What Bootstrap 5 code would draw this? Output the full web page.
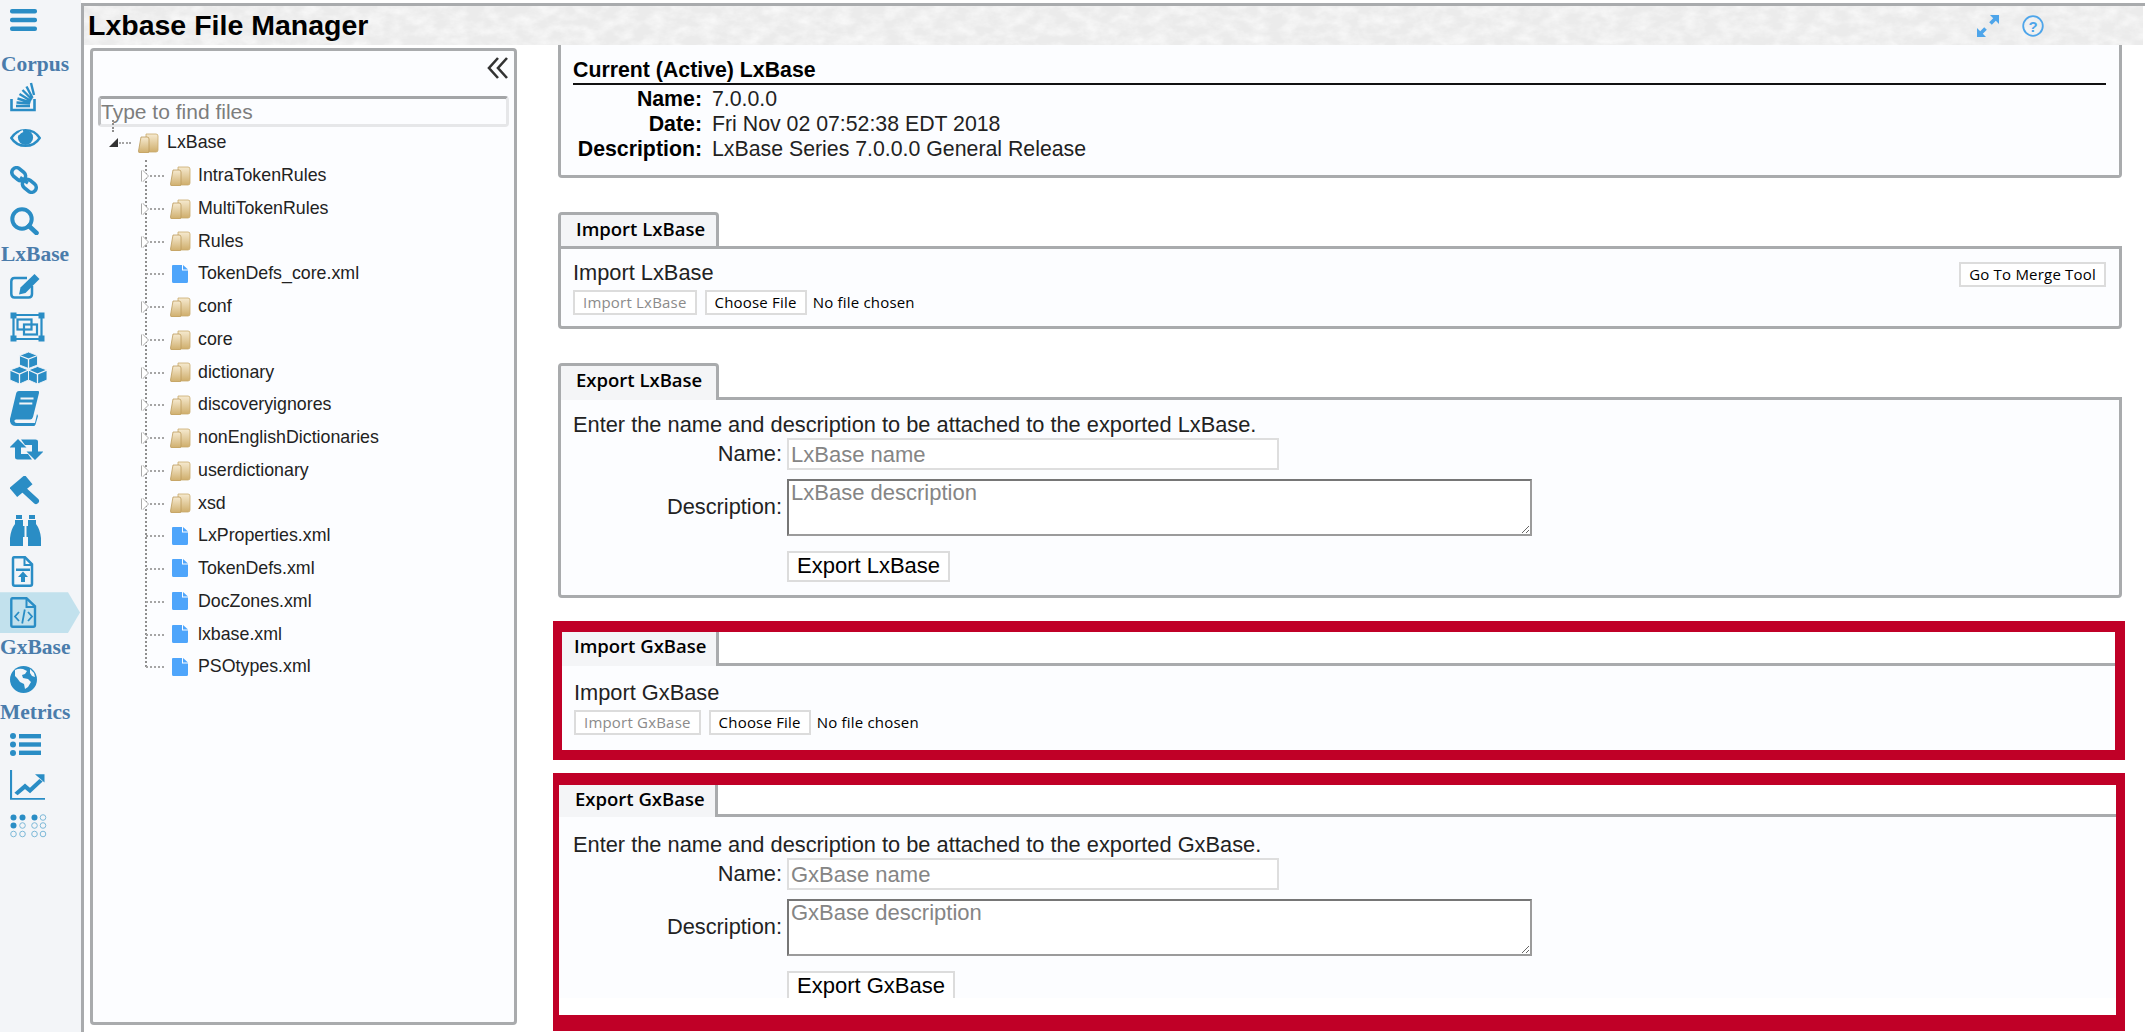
<!DOCTYPE html>
<html>
<head>
    <title>Lxbase File Manager</title>
    <link href="https://cdn.jsdelivr.net/npm/bootstrap@5.3.3/dist/css/bootstrap.min.css" rel="stylesheet">
    <style>
        html, body { height: 1032px; overflow: hidden; background: #fff; font-family: "Liberation Sans", Arial, sans-serif; color: #222; }
        .app-shell { height: 1032px; }

        /* left icon rail */
        .icon-rail { width: 81px; flex: none; background: #f3f5f8; }
        .rail-slot { height: 40.8px; padding-left: 10px; flex: none; }
        .rail-slot svg { fill: #2a8dc5; display: block; }
        .rail-wide { height: 41.5px; }
        .rail-active { background: #c2e1ed; clip-path: polygon(0 0, 68px 0, 80px 50%, 68px 100%, 0 100%); }
        .rail-label { height: 24px; width: 70px; flex: none; font: bold 21.5px/24px "Liberation Serif", serif; color: #4a7cab; text-align: center; white-space: nowrap; }
        .rail-label-first { margin-top: 11px; }
        .rail-label-gap { margin-top: 2px; }

        /* main frame */
        .main-frame { margin-top: 3px; border-top: 3px solid #a9abad; border-left: 3px solid #a9abad; min-width: 0; }
        .title-band { height: 39px; padding: 0 0 0 4px; margin-right: 2px; background-color: #ebebeb;
            background-image: url("data:image/svg+xml,%3Csvg xmlns='http://www.w3.org/2000/svg' width='2100' height='39'%3E%3Cfilter id='n'%3E%3CfeTurbulence type='fractalNoise' baseFrequency='0.06 0.1' numOctaves='4' seed='7'/%3E%3CfeColorMatrix values='0 0 0 0 1 0 0 0 0 1 0 0 0 0 1 0 0 0 1.2 -0.4'/%3E%3C/filter%3E%3Crect width='2100' height='39' filter='url(%23n)'/%3E%3C/svg%3E"); }
        .title-band h1 { font: bold 28.5px/37px "Liberation Sans", Arial, sans-serif; color: #000; margin: 0; }
        .band-tools { padding-right: 99px; gap: 23px; }

        /* file tree */
        .work-area { padding-left: 6px; min-height: 0; }
        .tree-panel { width: 427px; height: 977px; flex: none; margin-top: 3px; border: 3px solid #a9abad; border-radius: 4px; background: #fcfdff; padding: 0 5px; }
        .collapse-btn { height: 45px; padding: 6px 1px 0 0; }
        .tree-search.form-control { height: 31px; padding: 1px 0 0 0; border: 3px solid #e6e7e9; border-top-color: #a3a5a7; border-left-color: #bcbec0; border-radius: 4px; font-size: 21px; background: #fcfdff; box-shadow: none; }
        .tree-search::placeholder { color: #7d7d7d; opacity: 1; }
        .tree-root { height: 33px; margin-top: -1px; padding-left: 11px; font-size: 17.8px; position: relative; }
        .tree-kids { list-style: none; margin: 0; padding: 0 0 0 72px; position: relative; font-size: 17.8px; }
        .tree-kids::before { content: ""; position: absolute; left: 47px; top: 1px; bottom: 16px; border-left: 2px dotted #8e8e8e; }
        .tree-kids li { height: 32.75px; position: relative; gap: 7px; }
        .tree-kids li::before { content: ""; position: absolute; left: -24px; width: 18px; top: 16px; border-top: 2px dotted #a5a5a5; }
        .tree-kids li.tree-closed::after { content: ""; position: absolute; left: -28px; top: 11px; border: 6px solid transparent; border-left: 6px solid #fff; filter: drop-shadow(1px 0 0 #aaa) drop-shadow(-1px 0 0 #aaa); }
        .root-line { width: 12px; margin: 0 7px 0 1px; border-top: 2px dotted #a5a5a5; }
        .root-arrow { width: 0; height: 0; border-style: solid; border-width: 0 0 9px 9px; border-color: transparent transparent #333 transparent; }
        .root-stem { position: absolute; left: 14px; top: -6px; height: 12px; border-left: 2px dotted #8e8e8e; }
        .file-glyph { margin: 0 3px 0 2px; }

        /* right column */
        .content-col { margin-left: 36px; width: 1572px; flex: none; min-width: 0; height: 987px; overflow: hidden; }
        .info-box, .tab-body { border: 3px solid #a9abad; background: #fcfdff; border-radius: 0 0 4px 4px; }
        .info-box { margin: 0 3px 0 5px; height: 133px; border-top: 0; padding: 12px 13px 0 12px; }
        .info-box h2 { font: bold 21.3px/26px "Liberation Sans", Arial, sans-serif; margin: 0 0 2px; border-bottom: 2px solid #111; color: #000; }
        .info-row { font-size: 21.3px; line-height: 25px; }
        .info-row b { width: 129px; flex: none; text-align: right; margin-right: 10px; color: #000; white-space: nowrap; }
        .tab-group { margin: 34px 3px 0 5px; }
        .tab-head { display: block; width: 161px; height: 37px; padding: 0 0 0 15px; background: #f4f5f7; border: 3px solid #a9abad; border-bottom: 0; border-radius: 4px 4px 0 0; font: 600 18.5px/28px "Open Sans", sans-serif; color: #000; white-space: nowrap; margin-bottom: -3px; position: relative; }
        .tab-body { padding: 11px 13px 0 12px; font-size: 21.8px; }
        .tab-body-import { height: 83px; padding-top: 10px; }
        .tab-body-export { height: 201px; }
        .body-line { line-height: 27px; white-space: nowrap; }
        .small-btn { font: 15px/21px "Open Sans", sans-serif; letter-spacing: .2px; padding: 0 8px; height: 25px; border: 2px solid #dcdcdc; border-radius: 0; background: #fff; color: #000; white-space: nowrap; }
        .small-btn:disabled { color: #8b8b8b; border-color: #dcdcdc; background: #fff; opacity: 1; }
        .no-file { font: 15px/25px "Open Sans", sans-serif; letter-spacing: .2px; color: #000; margin-left: 6px; }
        .merge-btn { position: absolute; right: 13px; top: 13px; }
        .form-line { gap: 5px; }
        .form-line label { width: 209px; text-align: right; }
        .name-input.form-control, .desc-input.form-control { border-radius: 0; padding: 0 2px; font-size: 22px; box-shadow: none; background: #fff; }
        .name-input.form-control { width: 492px; height: 32px; border: 2px solid #dedede; }
        .desc-input.form-control { width: 745px; height: 57px; min-height: 0; border: 2px solid #9b9b9b; border-top-color: #767676; border-left-color: #767676; line-height: 24px; resize: both; }
        .name-input::placeholder, .desc-input::placeholder { color: #858585; opacity: 1; }
        .export-btn { font: 22px/26px "Liberation Sans", Arial, sans-serif; height: 31px; padding: 0 8px; margin: 15px 0 0 214px; border: 2px solid #dcdcdc; border-radius: 0; background: #fff; color: #000; white-space: nowrap; }

        /* red call-out frames */
        .red-frame { background: #fff; border: solid #c00027; }
        .red-import { border-width: 11px 10px 11px 9px; margin-top: 23px; height: 139px; }
        .red-export { border-width: 12px 9px 16px 6px; margin-top: 13px; height: 258px; }
        .red-frame .tab-head { border-top: 0; border-left: 0; border-radius: 0; height: 34px; width: 157px; padding-left: 12px; }
        .red-export .tab-head { height: 32px; width: 159px; line-height: 27px; padding-left: 16px; }
        .red-frame .tab-body { border-width: 3px 0 0; border-radius: 0; }
        .red-import .tab-body { padding-top: 13px; height: 87px; }
        .red-export .tab-body { height: 184px; overflow: hidden; padding-left: 14px; padding-top: 14px; }
        .red-export .body-line { line-height: 27px; }
    </style>
</head>
<body>
<svg width="0" height="0" class="position-absolute">
    <defs>
        <linearGradient id="tan" x1="0" y1="0" x2="0" y2="1"><stop offset="0" stop-color="#f6ead0"/><stop offset="1" stop-color="#cfae6c"/></linearGradient>
        <symbol id="folder" viewBox="0 0 21 21">
            <path d="M8 2h10q2 0 2 2v14q0 2-2 2H8z" fill="url(#tan)" stroke="#c9aa6c" stroke-width=".8"/>
            <path d="M3 5h6q2 0 2 2v12q0 2-2 2H2q-1.500 0-1.500-2z" fill="url(#tan)" stroke="#bb9a5c" stroke-width=".8"/>
        </symbol>
        <symbol id="xmlfile" viewBox="0 0 16 18">
            <path d="M1 0h9v5.500h6v11q0 1.500-1.500 1.500h-13Q0 18 0 16.500V1q0-1 1-1z" fill="#4ea5fb"/>
            <path d="M11 0l5 4.500h-5z" fill="#4ea5fb"/>
        </symbol>
    </defs>
</svg>

<div class="app-shell d-flex">
    <nav class="icon-rail d-flex flex-column">
        <div class="rail-slot d-flex align-items-center">
            <svg width="27" height="22" viewBox="0 0 27 22"><rect width="27" height="4.500" rx="2"/><rect y="8.700" width="27" height="4.500" rx="2"/><rect y="17.500" width="27" height="4.500" rx="2"/></svg>
        </div>
        <div class="rail-label rail-label-first">Corpus</div>
        <div class="rail-slot rail-wide d-flex align-items-center">
            <svg width="26" height="30" viewBox="0 0 26 30"><path d="M1.500 17v11h23V17" fill="none" stroke="#2a8dc5" stroke-width="2.600"/><path d="M6 24h14" stroke="#2a8dc5" stroke-width="2.600"/><path d="M6.500 20.500l13.500 1M7.500 16.500l13 4M9.500 12l11.500 7M12.500 8l9.500 9.500M16.500 4.500l6 11.500M21 1l3 12" stroke="#2a8dc5" stroke-width="2.400" fill="none"/></svg>
        </div>
        <div class="rail-slot rail-wide d-flex align-items-center">
            <svg width="31" height="20" viewBox="0 0 31 20"><path d="M1.300 10C8-.5 23-.5 29.700 10 23 20.500 8 20.500 1.300 10z" fill="none" stroke="#2a8dc5" stroke-width="2.400"/><circle cx="15.500" cy="9.500" r="7.600"/><path d="M8 7c1.500-2 3-3.300 5-4" stroke="#f3f5f8" stroke-width="2" fill="none"/></svg>
        </div>
        <div class="rail-slot rail-wide d-flex align-items-center">
            <svg width="28" height="28" viewBox="0 0 28 28"><g fill="none" stroke="#2a8dc5" stroke-width="3.600"><rect x="1.200" y="3.500" width="15" height="9.500" rx="4.700" transform="rotate(40 8.700 8.200)"/><rect x="11.800" y="15" width="15" height="9.500" rx="4.700" transform="rotate(40 19.300 19.800)"/></g><path d="M10 11.500l8 5.500" stroke="#2a8dc5" stroke-width="3.400"/></svg>
        </div>
        <div class="rail-slot rail-wide d-flex align-items-center">
            <svg width="29" height="28" viewBox="0 0 29 28"><circle cx="12" cy="12" r="9.700" fill="none" stroke="#2a8dc5" stroke-width="4"/><path d="M19 19l7.500 7" stroke="#2a8dc5" stroke-width="4.600" stroke-linecap="round"/></svg>
        </div>
        <div class="rail-label">LxBase</div>
        <div class="rail-slot d-flex align-items-center">
            <svg width="31" height="26" viewBox="0 0 31 26"><path d="M22 13v8q0 3.500-3.500 3.500h-14Q1.300 24.500 1.300 21V8.500Q1.300 5 4.500 5H17" fill="none" stroke="#2a8dc5" stroke-width="2.500"/><path d="M10.500 14.500L24.500 1l5 5-14 14-6.500 1.500z"/></svg>
        </div>
        <div class="rail-slot d-flex align-items-center">
            <svg width="35" height="30" viewBox="0 0 35 30"><g fill="none" stroke="#2a8dc5"><path d="M3.500 3h28M3.500 27h28M3.500 3v24M31.500 3v24" stroke-width="2.200"/><rect x="7.500" y="7.500" width="14" height="10" stroke-width="2.200"/><rect x="14" y="12.500" width="13" height="10" stroke-width="2.200"/></g><g><rect width="6" height="6" x="0.500" y="0.500"/><rect width="6" height="6" x="28.500" y="0.500"/><rect width="6" height="6" x="0.500" y="23.500"/><rect width="6" height="6" x="28.500" y="23.500"/></g></svg>
        </div>
        <div class="rail-slot d-flex align-items-center">
            <svg width="37" height="32" viewBox="0 0 37 32"><g stroke="#f3f5f8" stroke-width=".9"><path d="M18.500 0l9 3.500v9.500l-9 3.500-9-3.500V3.500z"/><path d="M9.500 14.500l9 3.500v10l-9 4-9.500-4V18z"/><path d="M27.500 14.500l9.500 3.500v10l-9.500 4-9-4V18z"/><path d="M9.500 3.500l9 3.500 9-3.500M18.500 7v9.500M0 18l9.500 4 9-4M9.500 22v10M18.500 18l9 4 9.500-4M27.500 22v10" fill="none" stroke-width="1.300"/></g></svg>
        </div>
        <div class="rail-slot d-flex align-items-center">
            <svg width="29" height="35" viewBox="0 0 29 35"><path d="M9 0h19q1.500 0 1 2l-6 24q-.8 2.500-3 2.500H6q-2 .2-1.500 2 .6 1.500 2.500 1.500h18l2-9 1 2-2.500 8.500q-.5 1.500-2 1.500H6q-5 0-6-4.500Q-.4 29 .5 26L6 3q.5-3 3-3z"/><path d="M10.500 7.500h13M9.300 12.500h13" stroke="#f3f5f8" stroke-width="2.200"/></svg>
        </div>
        <div class="rail-slot d-flex align-items-center">
            <svg width="33" height="21" viewBox="0 0 33 21"><path d="M8 0l8.500 8.500H11V15h7l4 5.500H7.500Q5 20.500 5 18.500V8.500H-.5z"/><path d="M25 21l-8.500-8.500H22V6h-7L11 .5h14.500Q28 .5 28 2.500v10h5.500z"/></svg>
        </div>
        <div class="rail-slot d-flex align-items-center">
            <svg width="30" height="29" viewBox="0 0 30 29"><rect x="1" y="4" width="20" height="12" transform="rotate(-40 11 10)"/><path d="M14 14l12 11" stroke="#2a8dc5" stroke-width="6" stroke-linecap="round"/></svg>
        </div>
        <div class="rail-slot d-flex align-items-center">
            <svg width="31" height="31" viewBox="0 0 31 31"><path d="M6 0h6v4H6zM19 0h6v4h-6zM5 5h8v6h1.500v11H13v9H0v-8q1-9 5-14zM26 5h-8v6h-1.500v11H18v9h13v-8q-1-9-5-14z"/></svg>
        </div>
        <div class="rail-slot d-flex align-items-center">
            <svg width="28" height="31" viewBox="0 0 28 31"><path d="M4 1.300h11l7 7V28a1.700 1.700 0 0 1-1.700 1.700H4.700A1.700 1.700 0 0 1 3 28V3q0-1.700 1-1.700z" fill="none" stroke="#2a8dc5" stroke-width="2.500"/><path d="M14.500 1.500V9h7" fill="none" stroke="#2a8dc5" stroke-width="2"/><path d="M6 12.500h14v2.500H6z"/><path d="M13 15.500l5 5.500h-3v5h-4v-5H8z"/></svg>
        </div>
        <div class="rail-slot rail-active d-flex align-items-center">
            <svg width="27" height="31" viewBox="0 0 27 31"><path d="M2.500 1.300h14l8.500 8V28q0 1.700-1.700 1.700H2.700Q1.300 29.700 1.300 28V3q0-1.700 1.200-1.700z" fill="none" stroke="#2a8dc5" stroke-width="2.400"/><path d="M16.500 1.500V10h8" fill="none" stroke="#2a8dc5" stroke-width="2"/><path d="M9 15l-4 4.500 4 4.500M18 15l4 4.500-4 4.500M14.800 12.500l-2.600 14" fill="none" stroke="#2a8dc5" stroke-width="1.800"/></svg>
        </div>
        <div class="rail-label rail-label-gap">GxBase</div>
        <div class="rail-slot d-flex align-items-center">
            <svg width="27" height="27" viewBox="0 0 27 27"><circle cx="13.500" cy="13.500" r="13.500"/><path d="M5 4q4-2 8-1l4 2-2 3-3 1 1 3 5 1 3 3-3 5-3 2-1-5-4-2-3-4-2-2zM20 3l4 4 1 4-3-1-2-3z" fill="#f3f5f8"/></svg>
        </div>
        <div class="rail-label">Metrics</div>
        <div class="rail-slot d-flex align-items-center">
            <svg width="31" height="23" viewBox="0 0 31 23"><circle cx="3" cy="3" r="3"/><circle cx="3" cy="11.500" r="3"/><circle cx="3" cy="20" r="3"/><rect x="9" y="1" width="22" height="4.400"/><rect x="9" y="9.300" width="22" height="4.400"/><rect x="9" y="17.600" width="22" height="4.400"/></svg>
        </div>
        <div class="rail-slot d-flex align-items-center">
            <svg width="35" height="30" viewBox="0 0 35 35" preserveAspectRatio="none"><path d="M1 0v33.700h34" fill="none" stroke="#2a8dc5" stroke-width="2.200"/><path d="M6 28l9-9 5 5 11-12" fill="none" stroke="#2a8dc5" stroke-width="4.500"/><path d="M25 5h9.500v9.500z"/></svg>
        </div>
        <div class="rail-slot d-flex align-items-center">
            <svg width="37" height="24" viewBox="0 0 37 24"><g><circle cx="3.500" cy="3.500" r="3"/><circle cx="12.500" cy="3.500" r="3"/><circle cx="24.500" cy="3.500" r="3"/><circle cx="3.500" cy="11.500" r="3"/></g><g fill="none" stroke="#7db9d8" stroke-width="1"><circle cx="33" cy="3.500" r="2.800"/><circle cx="12.500" cy="11.500" r="2.800"/><circle cx="24.500" cy="11.500" r="2.800"/><circle cx="33" cy="11.500" r="2.800"/><circle cx="3.500" cy="20" r="2.800"/><circle cx="12.500" cy="20" r="2.800"/><circle cx="24.500" cy="20" r="2.800"/><circle cx="33" cy="20" r="2.800"/></g></svg>
        </div>
    </nav>

    <div class="main-frame flex-grow-1 d-flex flex-column">
        <header class="title-band d-flex align-items-center justify-content-between">
            <h1>Lxbase File Manager</h1>
            <div class="band-tools d-flex align-items-center">
                <svg width="22" height="22" viewBox="0 0 22 22" fill="#4ea5ea"><path d="M13 0h9v9l-3.200-3.200-4 4-2.600-2.600 4-4zM9 22H0v-9l3.200 3.200 4-4 2.600 2.600-4 4z"/></svg>
                <svg width="22" height="22" viewBox="0 0 22 22"><circle cx="11" cy="11" r="9.800" fill="none" stroke="#4ea5ea" stroke-width="1.800"/><text x="11" y="16.500" text-anchor="middle" font-family="Liberation Sans" font-weight="bold" font-size="15" fill="#4ea5ea">?</text></svg>
            </div>
        </header>
        <div class="work-area d-flex flex-grow-1">
            <aside class="tree-panel">
                <div class="collapse-btn d-flex justify-content-end">
                    <svg width="21" height="22" viewBox="0 0 21 22" fill="none" stroke="#333" stroke-width="2.600"><path d="M11 1L2 11l9 10M20 1l-9 10 9 10"/></svg>
                </div>
                <input class="tree-search form-control" type="text" placeholder="Type to find files">
                <div class="tree-root d-flex align-items-center">
                    <span class="root-stem"></span>
                    <span class="root-arrow"></span>
                    <span class="root-line"></span>
                    <svg width="21" height="21"><use href="#folder"/></svg>
                    <span class="ms-2">LxBase</span>
                </div>
                <ul class="tree-kids" id="treeKids"></ul>
            </aside>
            <main class="content-col">
                <section class="info-box">
                    <h2>Current (Active) LxBase</h2>
                    <div class="info-row d-flex"><b>Name:</b><span>7.0.0.0</span></div>
                    <div class="info-row d-flex"><b>Date:</b><span>Fri Nov 02 07:52:38 EDT 2018</span></div>
                    <div class="info-row d-flex"><b>Description:</b><span>LxBase Series 7.0.0.0 General Release</span></div>
                </section>

                <section class="tab-group">
                    <div class="tab-head">Import LxBase</div>
                    <div class="tab-body tab-body-import position-relative">
                        <div class="body-line">Import LxBase</div>
                        <div class="d-flex mt-1">
                            <button class="small-btn" disabled>Import LxBase</button>
                            <button class="small-btn ms-2">Choose File</button>
                            <span class="no-file">No file chosen</span>
                        </div>
                        <button class="small-btn merge-btn">Go To Merge Tool</button>
                    </div>
                </section>

                <section class="tab-group">
                    <div class="tab-head">Export LxBase</div>
                    <div class="tab-body tab-body-export">
                        <div class="body-line">Enter the name and description to be attached to the exported LxBase.</div>
                        <div class="form-line d-flex align-items-center"><label>Name:</label><input class="name-input form-control" type="text" placeholder="LxBase name"></div>
                        <div class="form-line d-flex align-items-center mt-2"><label>Description:</label><textarea class="desc-input form-control" placeholder="LxBase description"></textarea></div>
                        <button class="export-btn d-block">Export LxBase</button>
                    </div>
                </section>

                <section class="red-frame red-import">
                    <div class="tab-head">Import GxBase</div>
                    <div class="tab-body">
                        <div class="body-line">Import GxBase</div>
                        <div class="d-flex mt-1">
                            <button class="small-btn" disabled>Import GxBase</button>
                            <button class="small-btn ms-2">Choose File</button>
                            <span class="no-file">No file chosen</span>
                        </div>
                    </div>
                </section>

                <section class="red-frame red-export">
                    <div class="tab-head">Export GxBase</div>
                    <div class="tab-body">
                        <div class="body-line">Enter the name and description to be attached to the exported GxBase.</div>
                        <div class="form-line d-flex align-items-center"><label>Name:</label><input class="name-input form-control" type="text" placeholder="GxBase name"></div>
                        <div class="form-line d-flex align-items-center mt-2"><label>Description:</label><textarea class="desc-input form-control" placeholder="GxBase description"></textarea></div>
                        <button class="export-btn d-block">Export GxBase</button>
                    </div>
                </section>
            </main>
        </div>
    </div>
</div>
<script src="https://cdn.jsdelivr.net/npm/bootstrap@5.3.3/dist/js/bootstrap.bundle.min.js"></script>
<script>
    // tree rows
    const kids = [
        ['IntraTokenRules', 1], ['MultiTokenRules', 1], ['Rules', 1], ['TokenDefs_core.xml', 0],
        ['conf', 1], ['core', 1], ['dictionary', 1], ['discoveryignores', 1], ['nonEnglishDictionaries', 1],
        ['userdictionary', 1], ['xsd', 1], ['LxProperties.xml', 0], ['TokenDefs.xml', 0], ['DocZones.xml', 0],
        ['lxbase.xml', 0], ['PSOtypes.xml', 0]
    ];
    document.getElementById('treeKids').innerHTML = kids.map(([name, isDir]) => isDir
        ? `<li class="d-flex align-items-center tree-closed"><svg width="21" height="21"><use href="#folder"/></svg><span>${name}</span></li>`
        : `<li class="d-flex align-items-center"><svg class="file-glyph" width="16" height="18"><use href="#xmlfile"/></svg><span>${name}</span></li>`
    ).join('');
</script>
</body>
</html>
